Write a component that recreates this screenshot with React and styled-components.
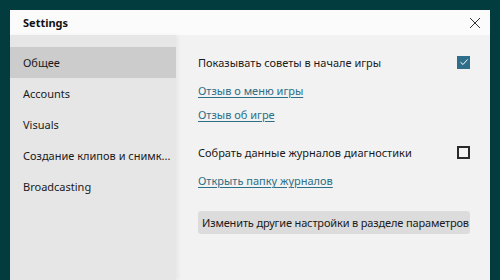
import React from 'react';
import styled, { createGlobalStyle } from 'styled-components';

const GlobalStyle = createGlobalStyle`
    html, body {
        margin: 0;
        padding: 0;
        background: #023c3e;
        font-family: 'Noto Sans', 'Liberation Sans', sans-serif;
        overflow: hidden;
    }
`;

const Page = styled.div`
    width: 500px;
    height: 280px;
    padding: 10px 10px 0 10px;
    box-sizing: border-box;
`;

const Window = styled.div`
    height: 270px;
    display: flex;
    flex-direction: column;
    background: #f2f2f2;
`;

const TitleBar = styled.div`
    height: 25px;
    flex-shrink: 0;
    display: flex;
    align-items: center;
    justify-content: space-between;
    padding: 0 8px 0 13px;
    background: #fbfbfb;
`;

const Title = styled.div`
    font-size: 11px;
    font-weight: 700;
    color: #111;
`;

const CloseButton = styled.div`
    width: 14px;
    height: 14px;
    display: flex;
    align-items: center;
    justify-content: center;
`;

const Body = styled.div`
    flex: 1;
    display: flex;
    min-height: 0;
`;

const Sidebar = styled.div`
    width: 166px;
    flex-shrink: 0;
    background: #e6e6e6;
    padding-top: 12px;
    box-shadow: 2px 0 4px rgba(0, 0, 0, 0.05);
    position: relative;
    z-index: 1;
`;

const NavItem = styled.div`
    height: 31px;
    display: flex;
    align-items: center;
    padding-left: 13px;
    font-size: 11px;
    color: #1a1a1a;
    background: ${p => (p.$active ? '#cccccc' : 'transparent')};
    white-space: nowrap;
    overflow: hidden;
`;

const Content = styled.div`
    flex: 1;
    padding: 12px 20px 0 22px;
    display: flex;
    flex-direction: column;
    min-width: 0;
`;

const OptionRow = styled.div`
    height: 30px;
    flex-shrink: 0;
    display: flex;
    align-items: center;
    justify-content: space-between;
    font-size: 11px;
    color: #1a1a1a;
    margin-top: ${p => p.$gap || 0}px;
`;

const Link = styled.a`
    display: block;
    flex-shrink: 0;
    font-size: 11px;
    color: #2c6f86;
    text-decoration: underline;
    text-underline-offset: 2px;
    line-height: 24px;
    margin-top: ${p => p.$gap || 0}px;
    cursor: pointer;
`;

const Checkbox = styled.div`
    width: 13px;
    height: 13px;
    box-sizing: border-box;
    display: flex;
    align-items: center;
    justify-content: center;
    background: ${p => (p.$checked ? '#2f6e8a' : 'transparent')};
    border: ${p => (p.$checked ? 'none' : '2px solid #2a2a2a')};
`;

const WideButton = styled.div`
    margin-top: 18px;
    height: 23px;
    flex-shrink: 0;
    display: flex;
    align-items: center;
    padding-left: 4px;
    background: #dcdcdc;
    border-radius: 3px;
    font-size: 11px;
    letter-spacing: -0.15px;
    color: #1a1a1a;
    white-space: nowrap;
    overflow: hidden;
`;

const nav = ['Общее', 'Accounts', 'Visuals', 'Создание клипов и снимк...', 'Broadcasting'];

const App = () => {
    return (
        <Page>
            <GlobalStyle />
            <Window>
                <TitleBar>
                    <Title>Settings</Title>
                    <CloseButton>
                        <svg width="12" height="12" viewBox="0 0 12 12">
                            <path d="M1 1L11 11M11 1L1 11" stroke="#333" strokeWidth="1" />
                        </svg>
                    </CloseButton>
                </TitleBar>
                <Body>
                    <Sidebar>
                        {nav.map((item, index) => (
                            <NavItem key={index} $active={index === 0}>{item}</NavItem>
                        ))}
                    </Sidebar>
                    <Content>
                        <OptionRow>
                            <span>Показывать советы в начале игры</span>
                            <Checkbox $checked>
                                <svg width="10" height="10" viewBox="0 0 10 10">
                                    <path d="M1.5 5.2L4 7.5L8.5 2.5" stroke="#fff" strokeWidth="1" fill="none" />
                                </svg>
                            </Checkbox>
                        </OptionRow>
                        <Link $gap={2}>Отзыв о меню игры</Link>
                        <Link>Отзыв об игре</Link>
                        <OptionRow $gap={10}>
                            <span>Собрать данные журналов диагностики</span>
                            <Checkbox />
                        </OptionRow>
                        <Link $gap={2}>Открыть папку журналов</Link>
                        <WideButton>Изменить другие настройки в разделе параметров Windows</WideButton>
                    </Content>
                </Body>
            </Window>
        </Page>
    );
};

export default App;
